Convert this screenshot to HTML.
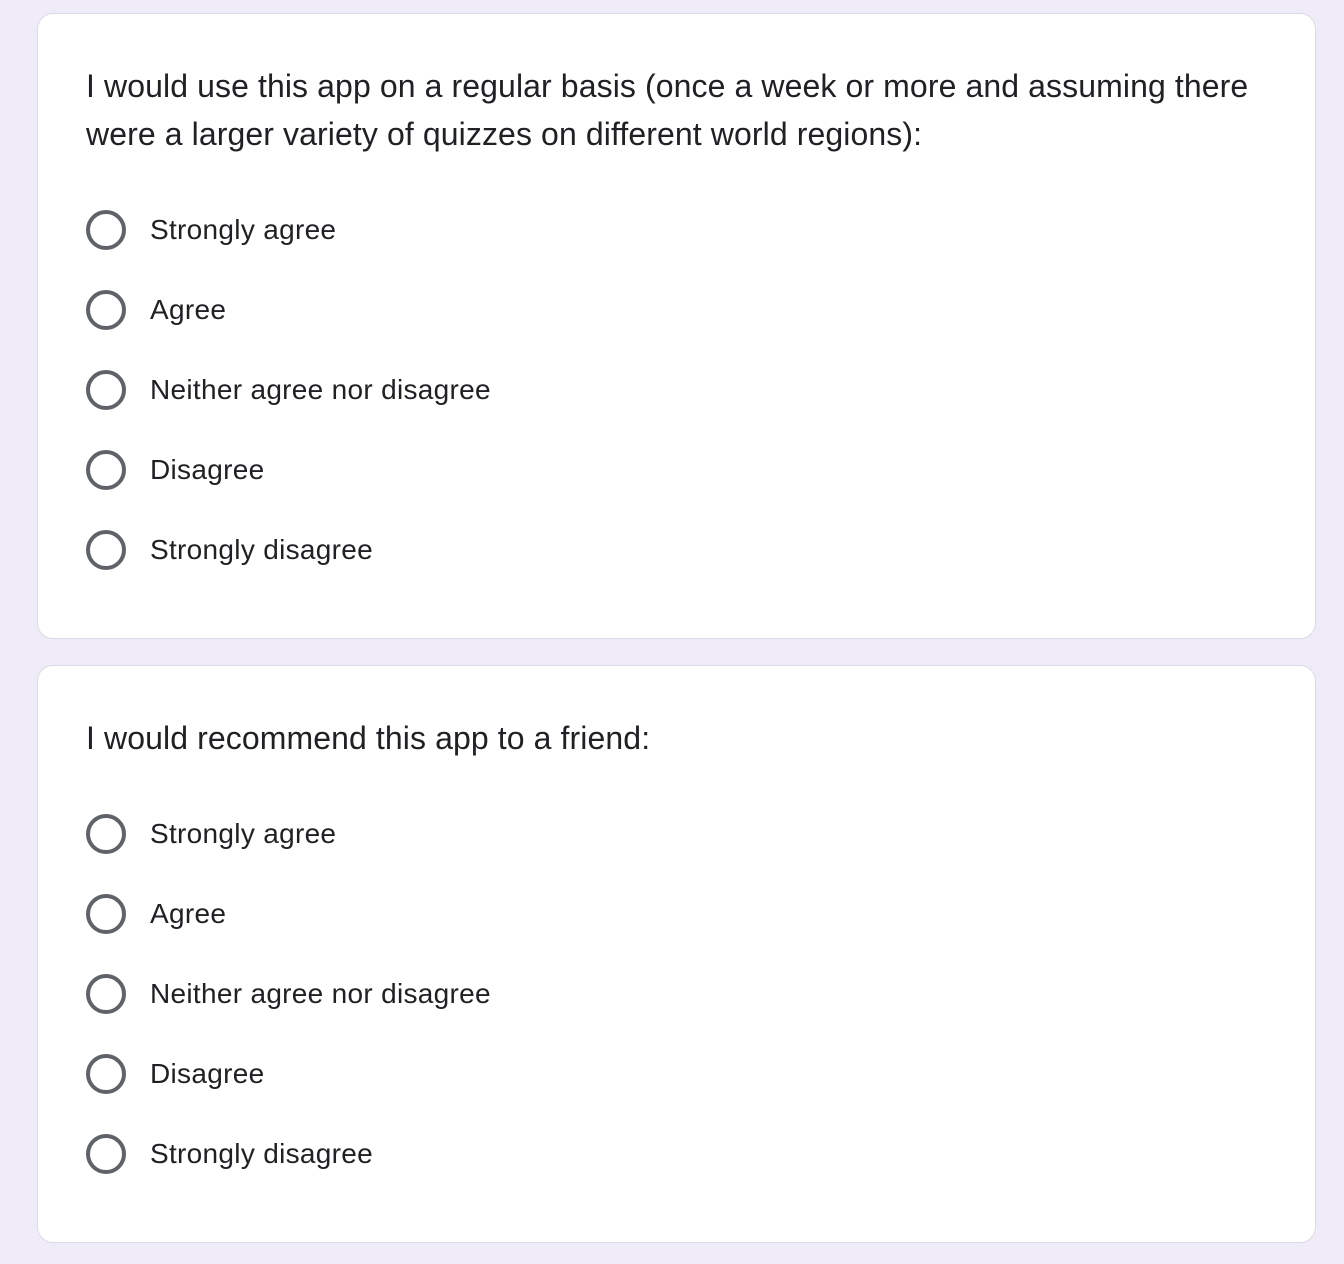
<!DOCTYPE html>
<html><head><meta charset="utf-8"><style>
html,body{margin:0;padding:0;background:#f0ebf8;width:1344px;height:1264px;overflow:hidden;font-family:"Liberation Sans",Arial,sans-serif;}
.card{position:absolute;left:37px;width:1279px;background:#fff;border:1px solid #dadce0;border-radius:16px;box-sizing:border-box;}
.q{position:absolute;left:48px;font-size:32px;line-height:48px;color:#202124;white-space:nowrap;letter-spacing:0.1px;}
.opt{position:absolute;left:48px;height:40px;}
.r{position:absolute;left:0;top:0;width:40px;height:40px;border:4px solid #5f6368;border-radius:50%;box-sizing:border-box;}
.t{position:absolute;left:64px;top:0;line-height:40px;font-size:28px;color:#202124;white-space:nowrap;letter-spacing:0.3px;}
</style></head><body>
<div class="card" style="top:13px;height:626px;">
<div class="q" style="top:48px;">I would use this app on a regular basis (once a week or more and assuming there<br>were a larger variety of quizzes on different world regions):</div>
<div class="opt" style="top:196px"><div class="r"></div><div class="t">Strongly agree</div></div>
<div class="opt" style="top:276px"><div class="r"></div><div class="t">Agree</div></div>
<div class="opt" style="top:356px"><div class="r"></div><div class="t">Neither agree nor disagree</div></div>
<div class="opt" style="top:436px"><div class="r"></div><div class="t">Disagree</div></div>
<div class="opt" style="top:516px"><div class="r"></div><div class="t">Strongly disagree</div></div>
</div>
<div class="card" style="top:665px;height:578px;">
<div class="q" style="top:48px;">I would recommend this app to a friend:</div>
<div class="opt" style="top:148px"><div class="r"></div><div class="t">Strongly agree</div></div>
<div class="opt" style="top:228px"><div class="r"></div><div class="t">Agree</div></div>
<div class="opt" style="top:308px"><div class="r"></div><div class="t">Neither agree nor disagree</div></div>
<div class="opt" style="top:388px"><div class="r"></div><div class="t">Disagree</div></div>
<div class="opt" style="top:468px"><div class="r"></div><div class="t">Strongly disagree</div></div>
</div>
</body></html>
